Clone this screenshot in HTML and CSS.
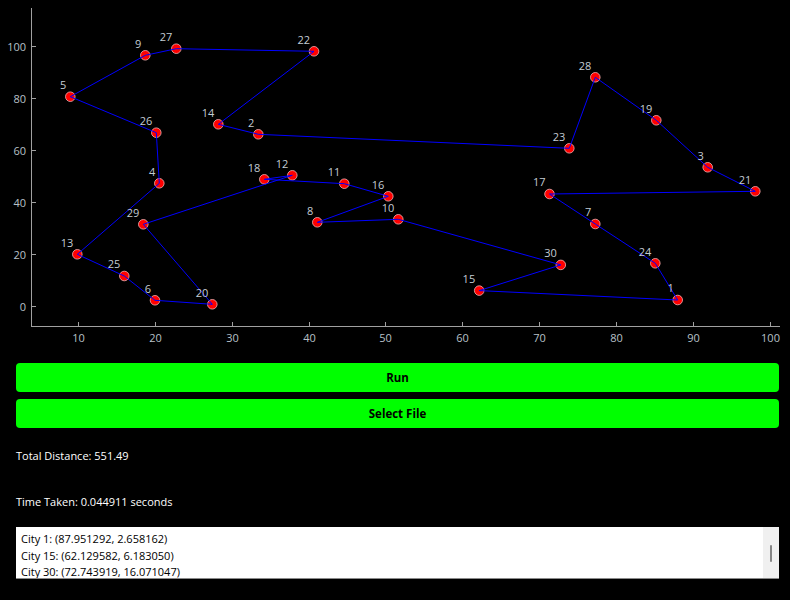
FILE: index.html
```html
<!DOCTYPE html>
<html>
<head>
<meta charset="utf-8">
<link rel="stylesheet" href="styles.css">
</head>
<body>
<div class="app">
  <div class="chart">
    <svg width="790" height="355" viewBox="0 0 790 355" xmlns="http://www.w3.org/2000/svg">
      <g class="axis">
        <line x1="31.5" y1="8" x2="31.5" y2="327"/>
        <line x1="31" y1="326.5" x2="780" y2="326.5"/>
        <line x1="31.5" y1="306.5" x2="36" y2="306.5"/>
        <line x1="31.5" y1="254.5" x2="36" y2="254.5"/>
        <line x1="31.5" y1="202.5" x2="36" y2="202.5"/>
        <line x1="31.5" y1="150.5" x2="36" y2="150.5"/>
        <line x1="31.5" y1="98.5" x2="36" y2="98.5"/>
        <line x1="31.5" y1="46.5" x2="36" y2="46.5"/>
        <line x1="78.5" y1="322" x2="78.5" y2="326.5"/>
        <line x1="155.5" y1="322" x2="155.5" y2="326.5"/>
        <line x1="232.5" y1="322" x2="232.5" y2="326.5"/>
        <line x1="309.5" y1="322" x2="309.5" y2="326.5"/>
        <line x1="385.5" y1="322" x2="385.5" y2="326.5"/>
        <line x1="462.5" y1="322" x2="462.5" y2="326.5"/>
        <line x1="539.5" y1="322" x2="539.5" y2="326.5"/>
        <line x1="616.5" y1="322" x2="616.5" y2="326.5"/>
        <line x1="693.5" y1="322" x2="693.5" y2="326.5"/>
        <line x1="770.5" y1="322" x2="770.5" y2="326.5"/>
      </g>
      <g class="ticks-y">
        <text x="26" y="311">0</text>
        <text x="26" y="259">20</text>
        <text x="26" y="207">40</text>
        <text x="26" y="155">60</text>
        <text x="26" y="103">80</text>
        <text x="26" y="51">100</text>
      </g>
      <g class="ticks-x">
        <text x="78.5" y="342">10</text>
        <text x="155.5" y="342">20</text>
        <text x="232.5" y="342">30</text>
        <text x="309.5" y="342">40</text>
        <text x="385.5" y="342">50</text>
        <text x="462.5" y="342">60</text>
        <text x="539.5" y="342">70</text>
        <text x="616.5" y="342">80</text>
        <text x="693.5" y="342">90</text>
        <text x="770.5" y="342">100</text>
      </g>
      <g class="dots">
        <circle cx="677.7" cy="300" r="4.8"/>
        <circle cx="479.2" cy="290.6" r="4.8"/>
        <circle cx="560.8" cy="264.9" r="4.8"/>
        <circle cx="398.3" cy="219.3" r="4.8"/>
        <circle cx="317.3" cy="222.3" r="4.8"/>
        <circle cx="388.3" cy="196.3" r="4.8"/>
        <circle cx="344.3" cy="183.7" r="4.8"/>
        <circle cx="264.3" cy="179.3" r="4.8"/>
        <circle cx="292.3" cy="175.3" r="4.8"/>
        <circle cx="143.3" cy="224.3" r="4.8"/>
        <circle cx="212.3" cy="304.3" r="4.8"/>
        <circle cx="155" cy="300.3" r="4.8"/>
        <circle cx="124.3" cy="276" r="4.8"/>
        <circle cx="77.3" cy="254.3" r="4.8"/>
        <circle cx="159.3" cy="183.3" r="4.8"/>
        <circle cx="156.3" cy="132.7" r="4.8"/>
        <circle cx="70.3" cy="96.7" r="4.8"/>
        <circle cx="145.3" cy="55.3" r="4.8"/>
        <circle cx="176.3" cy="48.7" r="4.8"/>
        <circle cx="314" cy="51.3" r="4.8"/>
        <circle cx="218.3" cy="124.3" r="4.8"/>
        <circle cx="258.3" cy="134.3" r="4.8"/>
        <circle cx="569.3" cy="148.3" r="4.8"/>
        <circle cx="595.3" cy="77.3" r="4.8"/>
        <circle cx="656.3" cy="120.3" r="4.8"/>
        <circle cx="707.7" cy="167.3" r="4.8"/>
        <circle cx="755.3" cy="191.3" r="4.8"/>
        <circle cx="549.5" cy="194" r="4.8"/>
        <circle cx="595.3" cy="224" r="4.8"/>
        <circle cx="655.3" cy="263.3" r="4.8"/>
      </g>
      <polyline class="route" points="677.7,300 479.2,290.6 560.8,264.9 398.3,219.3 317.3,222.3 388.3,196.3 344.3,183.7 264.3,179.3 292.3,175.3 143.3,224.3 212.3,304.3 155,300.3 124.3,276 77.3,254.3 159.3,183.3 156.3,132.7 70.3,96.7 145.3,55.3 176.3,48.7 314,51.3 218.3,124.3 258.3,134.3 569.3,148.3 595.3,77.3 656.3,120.3 707.7,167.3 755.3,191.3 549.5,194 595.3,224 655.3,263.3 677.7,300"/>
      <g class="labels">
        <text x="673.7" y="292.3">1</text>
        <text x="475.2" y="283">15</text>
        <text x="556.8" y="257.3">30</text>
        <text x="394.3" y="211.7">10</text>
        <text x="313.3" y="214.7">8</text>
        <text x="384.3" y="188.7">16</text>
        <text x="340.3" y="176">11</text>
        <text x="260.3" y="171.7">18</text>
        <text x="288.3" y="167.7">12</text>
        <text x="139.3" y="216.7">29</text>
        <text x="208.3" y="296.7">20</text>
        <text x="151" y="292.7">6</text>
        <text x="120.3" y="268.3">25</text>
        <text x="73.3" y="246.7">13</text>
        <text x="155.3" y="175.7">4</text>
        <text x="152.3" y="125">26</text>
        <text x="66.3" y="89">5</text>
        <text x="141.3" y="47.7">9</text>
        <text x="172.3" y="41">27</text>
        <text x="310" y="43.7">22</text>
        <text x="214.3" y="116.7">14</text>
        <text x="254.3" y="126.7">2</text>
        <text x="565.3" y="140.7">23</text>
        <text x="591.3" y="69.7">28</text>
        <text x="652.3" y="112.7">19</text>
        <text x="703.7" y="159.7">3</text>
        <text x="751.3" y="183.7">21</text>
        <text x="545.5" y="186.3">17</text>
        <text x="591.3" y="216.3">7</text>
        <text x="651.3" y="255.7">24</text>
      </g>
    </svg>
  </div>
  <div class="panel">
    <button class="btn">Run</button>
    <button class="btn">Select File</button>
    <div class="info first">Total Distance: 551.49</div>
    <div class="info second">Time Taken: 0.044911 seconds</div>
    <div class="output">
      <div class="output-text">
        <div>City 1: (87.951292, 2.658162)</div>
        <div>City 15: (62.129582, 6.183050)</div>
        <div>City 30: (72.743919, 16.071047)</div>
      </div>
      <div class="scrollbar"><div class="thumb"></div></div>
    </div>
  </div>
</div>
</body>
</html>
```

FILE: styles.css
```css
html, body {
  margin: 0;
  padding: 0;
  background: #000000;
}
body {
  width: 790px;
  height: 600px;
  overflow: hidden;
  font-family: "Open Sans", "Noto Sans", sans-serif;
}
.app {
  display: flex;
  flex-direction: column;
}
.chart svg {
  display: block;
}
.axis line {
  stroke: #a0a0a0;
  stroke-width: 1;
}
.ticks-y text {
  fill: #b8c0c8;
  font-size: 11px;
  font-family: "Open Sans", sans-serif;
  text-anchor: end;
}
.ticks-x text {
  fill: #b8c0c8;
  font-size: 11px;
  font-family: "Open Sans", sans-serif;
  text-anchor: middle;
}
.dots circle {
  fill: #ff0000;
  stroke: #f0b4b4;
  stroke-width: 0.8;
}
.route {
  fill: none;
  stroke: #0000ff;
  stroke-width: 1;
}
.labels text {
  fill: #c4ccd4;
  font-size: 11px;
  font-family: "Open Sans", sans-serif;
  text-anchor: end;
}
.panel {
  display: flex;
  flex-direction: column;
  padding: 8px 11px 0 16px;
}
.btn {
  height: 29px;
  margin: 0 0 7px 0;
  border: none;
  border-radius: 4px;
  background: #00ff00;
  color: #000000;
  font-family: "Open Sans", sans-serif;
  font-weight: 700;
  font-size: 11.5px;
  padding: 0;
}
.info {
  color: #ffffff;
  font-size: 11px;
  line-height: 16px;
  height: 16px;
}
.info.first {
  margin-top: 13px;
}
.info.second {
  margin-top: 30px;
}
.output {
  margin-top: 17px;
  height: 51px;
  background: #ffffff;
  border-bottom: 1px solid #8a8a8a;
  display: flex;
  overflow: hidden;
}
.output-text {
  flex: 1;
  padding: 4px 5px 0 5px;
  font-size: 11px;
  line-height: 16.5px;
  color: #000000;
  overflow: hidden;
}
.scrollbar {
  width: 16px;
  background: #f0f0f0;
  display: flex;
  justify-content: center;
  align-items: flex-start;
}
.thumb {
  width: 2px;
  height: 17px;
  margin-top: 18px;
  background: #858585;
  border-radius: 1px;
}
```
